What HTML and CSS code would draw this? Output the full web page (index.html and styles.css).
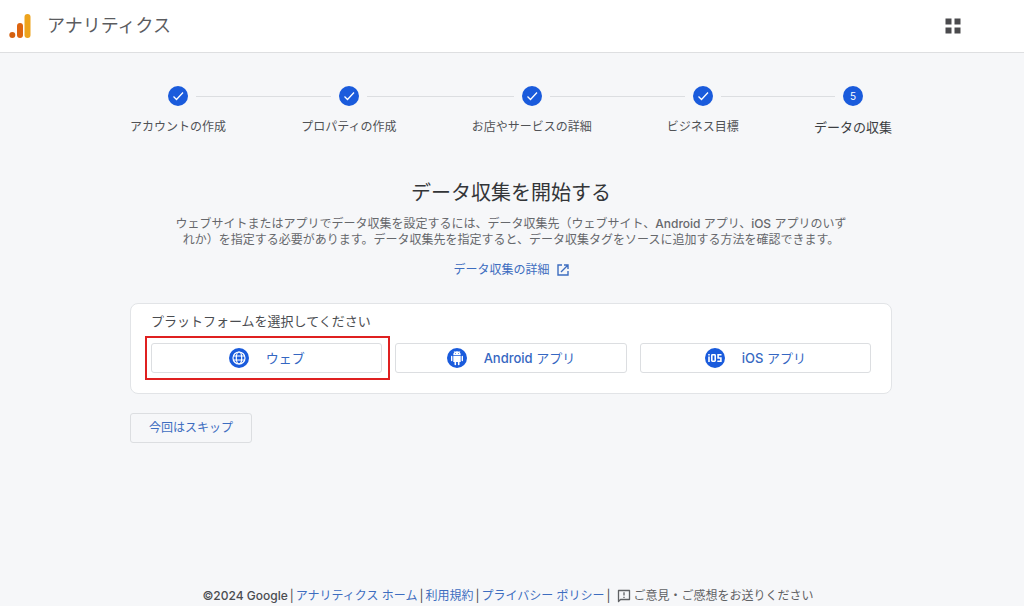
FILE: index.html
```html
<!DOCTYPE html>
<html lang="ja">
<head>
<meta charset="utf-8">
<meta name="viewport" content="width=device-width, initial-scale=1">
<title>アナリティクス</title>
<link rel="stylesheet" href="styles.css">
</head>
<body>
<header class="topbar">
  <svg class="logo" viewBox="0 0 24 26" aria-hidden="true">
    <rect x="15.500" y="1" width="6" height="24" rx="3" fill="#eda31c"/>
    <rect x="8" y="10" width="6" height="15" rx="3" fill="#dd6410"/>
    <circle cx="3.300" cy="22" r="3" fill="#d4600f"/>
  </svg>
  <span class="product">アナリティクス</span>
  <button class="apps" type="button" aria-label="アプリ">
    <svg viewBox="0 0 16 16" aria-hidden="true"><path d="M.5.5h6v6h-6zM9.500.5h6v6h-6zM.5 9.500h6v6h-6zM9.500 9.500h6v6h-6z" fill="#4a4a4d"/></svg>
  </button>
</header>
<main class="content">
  <ol class="steps">
    <li class="step">
      <div class="marker"><span class="badge"><svg viewBox="0 0 20 20" aria-hidden="true"><path d="M5.500 10.500l3 3 6.500-7"/></svg></span></div>
      <span class="step-label">アカウントの作成</span>
    </li>
    <li class="connector" aria-hidden="true"></li>
    <li class="step">
      <div class="marker"><span class="badge"><svg viewBox="0 0 20 20" aria-hidden="true"><path d="M5.500 10.500l3 3 6.500-7"/></svg></span></div>
      <span class="step-label">プロパティの作成</span>
    </li>
    <li class="connector" aria-hidden="true"></li>
    <li class="step">
      <div class="marker"><span class="badge"><svg viewBox="0 0 20 20" aria-hidden="true"><path d="M5.500 10.500l3 3 6.500-7"/></svg></span></div>
      <span class="step-label">お店やサービスの詳細</span>
    </li>
    <li class="connector" aria-hidden="true"></li>
    <li class="step">
      <div class="marker"><span class="badge"><svg viewBox="0 0 20 20" aria-hidden="true"><path d="M5.500 10.500l3 3 6.500-7"/></svg></span></div>
      <span class="step-label">ビジネス目標</span>
    </li>
    <li class="connector" aria-hidden="true"></li>
    <li class="step current" aria-current="step">
      <div class="marker"><span class="badge">5</span></div>
      <span class="step-label">データの収集</span>
    </li>
  </ol>

  <section class="intro">
    <h1>データ収集を開始する</h1>
    <p>ウェブサイトまたはアプリでデータ収集を設定するには、データ収集先（ウェブサイト、<span class="latin">Android</span> アプリ、<span class="latin">iOS</span> アプリのいず<br>れか）を指定する必要があります。データ収集先を指定すると、データ収集タグをソースに追加する方法を確認できます。</p>
    <a class="more" href="#">データ収集の詳細
      <svg viewBox="0 0 12 12" aria-hidden="true"><path d="M5 1H1v10h10V7M7 1h4v4M11 1L4 8" fill="none" stroke="currentColor" stroke-width="1.400"/></svg>
    </a>
  </section>

  <section class="card" aria-labelledby="platform-title">
    <h2 id="platform-title">プラットフォームを選択してください</h2>
    <div class="platforms">
      <button class="platform highlighted" type="button">
        <svg viewBox="0 0 20 20" aria-hidden="true"><circle cx="10" cy="10" r="10" fill="#1a5bdc"/><g fill="none" stroke="#fff" stroke-width="1.200"><circle cx="10" cy="10" r="6"/><ellipse cx="10" cy="10" rx="2.700" ry="6"/><path d="M4.500 8h11M4.500 12h11"/></g></svg>
        <span>ウェブ</span>
      </button>
      <button class="platform" type="button">
        <svg viewBox="0 0 20 20" aria-hidden="true"><circle cx="10" cy="10" r="10" fill="#1a5bdc"/><path d="M6.300 7a3.700 3.700 0 0 1 7.400 0zM6.300 7.800h7.400v6.200h-1.200v2.500a.8.8 0 0 1-1.600 0V14H9.100v2.500a.8.8 0 0 1-1.600 0V14H6.300z" fill="#fff"/><path d="M4.700 8.500v4M15.300 8.500v4" stroke="#fff" stroke-width="1.400" stroke-linecap="round"/><path d="M7.800 4.200L7 3M12.200 4.200L13 3" stroke="#fff" stroke-width=".6"/><path d="M8.200 5.200h.8v.7h-.8zM11 5.200h.8v.7H11z" fill="#1a5bdc"/></svg>
        <span><span class="latin">Android</span> アプリ</span>
      </button>
      <button class="platform" type="button">
        <svg viewBox="0 0 20 20" aria-hidden="true"><circle cx="10" cy="10" r="10" fill="#1a5bdc"/><g fill="none" stroke="#fff" stroke-width="1.600"><path d="M4 8.500V14M4 6v1.500"/><rect x="6.800" y="6.800" width="3.400" height="6.400" rx=".6"/><path d="M16.500 6.800h-3.400v3.200h2.800v3.200h-3.600"/></g></svg>
        <span><span class="latin">iOS</span> アプリ</span>
      </button>
    </div>
  </section>

  <button class="skip" type="button">今回はスキップ</button>
</main>
<footer class="footer">
  <span class="latin">©2024 Google</span><span>|</span>
  <a href="#">アナリティクス ホーム</a><span>|</span>
  <a href="#">利用規約</a><span>|</span>
  <a href="#">プライバシー ポリシー</a><span>|</span>
  <button class="feedback" type="button"><svg viewBox="0 0 14 14" aria-hidden="true"><path d="M1.500 12.500v-11h11v9h-9z" fill="none" stroke="currentColor" stroke-width="1.300" stroke-linejoin="round"/><path d="M7 3.300v3.200M7 7.700v1.300" stroke="currentColor" stroke-width="1.300"/></svg>ご意見・ご感想をお送りください</button>
</footer>
</body>
</html>
```
FILE: styles.css
```css
* { box-sizing: border-box; }

body {
  margin: 0;
  min-height: 100vh;
  display: flex;
  flex-direction: column;
  background: #f6f7f9;
  color: #4a4c50;
  font: 400 12px/16px Inter, "Noto Sans CJK JP", sans-serif;
}

button { font: inherit; cursor: pointer; }
a { color: #3d6dc0; text-decoration: none; }
svg { display: block; flex: none; }
.latin { font-weight: 500; }

.topbar {
  display: flex;
  align-items: center;
  height: 53px;
  padding: 0 63px 0 9px;
  background: #fff;
  border-bottom: 1px solid #dedfe1;
}
.logo { width: 24px; height: 26px; }
.product {
  margin-left: 14px;
  font-size: 18px;
  line-height: 24px;
  color: #5b5c5f;
}
.apps {
  margin-left: auto;
  padding: 0;
  border: 0;
  background: none;
}
.apps svg { width: 16px; height: 16px; }

.content {
  width: 100%;
  max-width: 764px;
  margin: 0 auto;
  padding-right: 2px;
  flex: 1;
}

.steps {
  display: flex;
  margin: 0;
  padding: 33px 0 0;
  list-style: none;
}
.step { text-align: center; color: #505256; }
.marker {
  display: flex;
  align-items: center;
  gap: 8px;
  height: 20px;
}
.marker::before,
.marker::after {
  content: "";
  flex: 1;
  height: 1px;
  background: #dcdee1;
}
.step:first-child .marker::before,
.step:last-child .marker::after { background: none; }
.connector {
  flex: 1;
  height: 1px;
  margin-top: 10px;
  background: #dcdee1;
}
.badge {
  display: grid;
  place-items: center;
  width: 20px;
  height: 20px;
  border-radius: 50%;
  background: #1a5bdc;
  color: #fff;
  font-size: 10px;
}
.badge svg {
  width: 20px;
  height: 20px;
  fill: none;
  stroke: #fff;
  stroke-width: 1.3;
}
.step-label {
  display: block;
  margin-top: 13px;
  white-space: nowrap;
}
.current .step-label { font-size: 13px; color: #3c3e42; }

.intro {
  display: flex;
  flex-direction: column;
  align-items: center;
  margin-top: 44px;
  text-align: center;
}
h1 {
  margin: 0;
  font-size: 20px;
  line-height: 28px;
  font-weight: 400;
  color: #333538;
}
.intro p { margin: 9px 0 0; color: #66686c; }
.more {
  display: flex;
  align-items: center;
  gap: 7px;
  margin-top: 14px;
}
.more svg { width: 12px; height: 12px; }

.card {
  margin-top: 25px;
  padding: 7px 20px 20px;
  background: #fff;
  border: 1px solid #e2e4e7;
  border-radius: 8px;
}
h2 {
  margin: 0;
  font-size: 13px;
  line-height: 20px;
  font-weight: 400;
}
.platforms {
  display: grid;
  grid-template-columns: repeat(3, 1fr);
  gap: 13px;
  margin-top: 12px;
}
.platform {
  position: relative;
  display: flex;
  align-items: center;
  justify-content: center;
  gap: 17px;
  height: 30px;
  padding: 0;
  background: #fff;
  border: 1px solid #dcdee1;
  border-radius: 3px;
  color: #3567c2;
  font-size: 13px;
}
.platform svg { width: 20px; height: 20px; }
.highlighted::after {
  content: "";
  position: absolute;
  inset: -8px -9px -8px -7px;
  border: 2px solid #df2020;
}

.skip {
  margin-top: 19px;
  height: 30px;
  padding: 0 18px;
  background: transparent;
  border: 1px solid #dcdee1;
  border-radius: 3px;
  color: #3d6dc0;
}

.footer {
  display: flex;
  flex-wrap: wrap;
  align-items: center;
  justify-content: center;
  gap: 0 2px;
  padding: 0 8px 2px 0;
}
.feedback {
  display: flex;
  align-items: center;
  gap: 3px;
  margin-left: 4px;
  padding: 0;
  border: 0;
  background: none;
  color: #5f6164;
}
.feedback svg { width: 14px; height: 14px; }
```
